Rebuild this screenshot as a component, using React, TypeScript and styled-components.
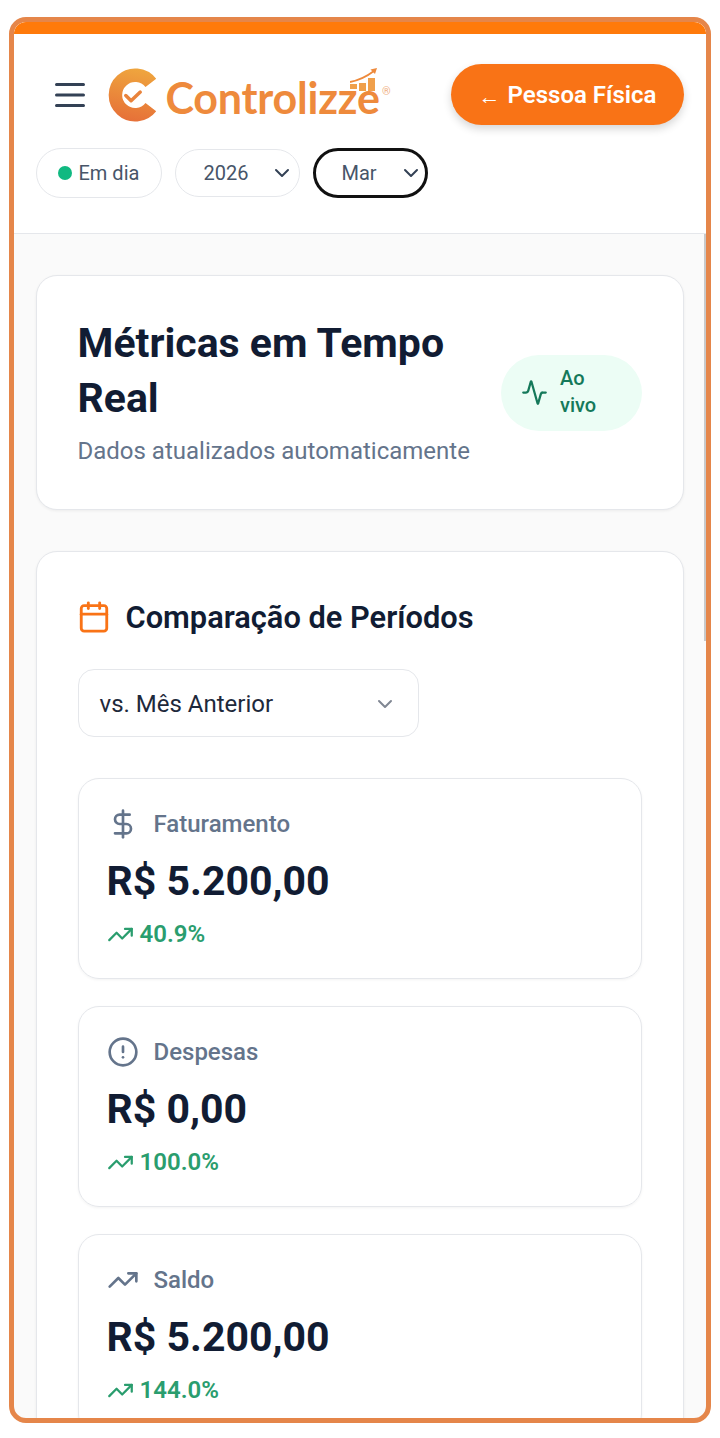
import React from 'react';
import styled, { createGlobalStyle } from 'styled-components';
import { Activity, AlertCircle, Calendar, ChevronDown, DollarSign, TrendingUp } from 'lucide-react';

const GlobalStyle = createGlobalStyle`
  * {
    box-sizing: border-box;
  }
  html,
  body {
    margin: 0;
    background: #fff;
    font-family: Roboto, 'Liberation Sans', sans-serif;
  }
`;

const Frame = styled.div`
  margin: 17px 9px 15px;
  height: 1406px;
  border: 5px solid #e5864a;
  border-radius: 17px;
  overflow: hidden;
  background: #fafafa;
`;

const Header = styled.header`
  background: #fff;
  border-top: 12px solid #ff7a0a;
  border-bottom: 1px solid #e5e7eb;
  height: 212px;
  padding: 30px 22px 0 21.5px;
`;

const TopRow = styled.div`
  display: flex;
  align-items: center;
  justify-content: space-between;
`;

const Brand = styled.div`
  display: flex;
  align-items: center;
  padding-left: 16px;
`;

const MenuIcon = styled.svg`
  color: #334155;
  margin-right: 20px;
`;

const LogoWord = styled.span`
  position: relative;
  margin-left: 7px;
  padding-top: 7px;
  font-family: Lato, sans-serif;
  font-size: 43px;
  font-weight: 700;
  letter-spacing: -0.2px;
  line-height: 50px;
  color: #ee8a3c;

  svg {
    position: absolute;
    top: 2px;
    right: 2px;
  }

  sup {
    position: absolute;
    top: 20px;
    right: -11px;
    font-family: Roboto, sans-serif;
    font-size: 11px;
    font-weight: 400;
    line-height: 12px;
    letter-spacing: 0;
    color: #f0b184;
  }
`;

const BackButton = styled.div`
  width: 233px;
  height: 61px;
  border-radius: 31px;
  background: #f97316;
  box-shadow: 0 4px 8px rgba(0, 0, 0, 0.16);
  display: flex;
  align-items: center;
  justify-content: center;
  color: #fff;
  font-size: 24px;
  font-weight: 600;
  white-space: nowrap;

  small {
    font-size: 22px;
    font-weight: 700;
    margin: 4px 7px 0 0;
  }
`;

const Filters = styled.div`
  display: flex;
  align-items: center;
  gap: 13px;
  margin-top: 23px;
`;

const Pill = styled.div<{ $width: number; $focused?: boolean }>`
  width: ${(p) => p.$width}px;
  height: ${(p) => (p.$focused ? 50 : 48)}px;
  border-radius: 25px;
  border: ${(p) => (p.$focused ? '3px solid #111' : '1px solid #e5e7eb')};
  display: flex;
  align-items: center;
  justify-content: space-between;
  padding: 0 ${(p) => (p.$focused ? 9 : 5)}px 0 ${(p) => (p.$focused ? 26 : 28)}px;
  font-size: 20px;
  color: #475569;

  svg {
    color: #334155;
    margin-right: ${(p) => (p.$focused ? -7 : 0)}px;
  }
`;

const StatusPill = styled(Pill)`
  height: 50px;
  justify-content: flex-start;
  gap: 7px;
  padding-left: 21px;
`;

const Dot = styled.span`
  width: 14px;
  height: 14px;
  border-radius: 50%;
  background: #10b981;
`;

const Main = styled.main`
  position: relative;
  padding: 41px 22px 0 21.5px;
  display: flex;
  flex-direction: column;
  gap: 41px;
`;

const ScrollThumb = styled.div`
  position: absolute;
  top: 0;
  right: 0;
  width: 2px;
  height: 407px;
  background: #c9c9c9;
`;

const Card = styled.section`
  background: #fff;
  border: 1px solid #e5e7eb;
  border-radius: 21px;
  box-shadow: 0 1px 3px rgba(0, 0, 0, 0.06);
  padding: 41px;
`;

const LiveCard = styled(Card)`
  height: 235px;
  display: flex;
  align-items: flex-start;
  justify-content: space-between;
  padding-top: 40px;
  padding-bottom: 40px;
`;

const Title = styled.h1`
  margin: 0;
  font-size: 41px;
  line-height: 55px;
  font-weight: 700;
  color: #111c33;
  width: 395px;
`;

const Subtitle = styled.p`
  margin: 9px 0 0;
  font-size: 24px;
  line-height: 32px;
  color: #64748b;
  white-space: nowrap;
`;

const LiveBadge = styled.div`
  align-self: center;
  flex-shrink: 0;
  width: 141px;
  height: 76px;
  border-radius: 38px;
  background: #ecfdf5;
  color: #15795a;
  display: flex;
  align-items: center;
  gap: 12px;
  padding-left: 20px;
  font-size: 20px;
  font-weight: 500;
  line-height: 27px;

  span {
    width: 50px;
    margin-top: -2px;
  }
`;

const SectionHead = styled.div`
  display: flex;
  align-items: center;
  gap: 15px;
  color: #f97316;
  margin: 8px 0 0;

  svg {
    margin: -2px 0 0 -1px;
  }
`;

const SectionTitle = styled.h2`
  margin: 0;
  font-size: 30.8px;
  line-height: 34px;
  font-weight: 600;
  color: #111c33;
`;

const PeriodSelect = styled.div`
  width: 341px;
  height: 68px;
  margin-top: 34px;
  border: 1px solid #e5e7eb;
  border-radius: 16px;
  display: flex;
  align-items: center;
  justify-content: space-between;
  padding: 1px 21px 0;
  font-size: 24px;
  color: #1e293b;

  svg {
    color: #808793;
  }
`;

const Metrics = styled.div`
  display: flex;
  flex-direction: column;
  gap: 27px;
  margin-top: 41px;
`;

const Metric = styled.article`
  height: 201px;
  border: 1px solid #e5e7eb;
  border-radius: 21px;
  box-shadow: 0 1px 3px rgba(0, 0, 0, 0.05);
  padding: 27px 28px 0;
`;

const MetricLabel = styled.div`
  display: flex;
  align-items: center;
  gap: 15px;
  height: 36px;
  font-size: 24px;
  font-weight: 500;
  color: #64748b;
`;

const MetricIcon = styled.span`
  display: flex;
  width: 32px;
  justify-content: center;
`;

const MetricValue = styled.div`
  margin-top: 13px;
  font-size: 41px;
  line-height: 52px;
  font-weight: 700;
  color: #111c33;
`;

const MetricDelta = styled.div`
  display: flex;
  align-items: center;
  gap: 6px;
  margin-top: 11px;
  font-size: 24px;
  line-height: 32px;
  font-weight: 600;
  color: #2a9d6e;
`;

function LogoMark() {
  return (
    <svg width="51" height="54" viewBox="0 0 52 56" fill="none">
      <defs>
        <linearGradient id="logo-c" x1="30" y1="0" x2="20" y2="56" gradientUnits="userSpaceOnUse">
          <stop offset="0" stopColor="#efa63e" />
          <stop offset="1" stopColor="#e66f38" />
        </linearGradient>
      </defs>
      <path d="M44 15.5A20.5 20.5 0 1 0 44 40.5" stroke="url(#logo-c)" strokeWidth="14" />
      <path d="M18 28.5l5.5 5.5L33 25" stroke="#e9833c" strokeWidth="3.6" strokeLinecap="round" strokeLinejoin="round" />
    </svg>
  );
}

function LogoChart() {
  return (
    <svg width="28" height="24" viewBox="0 0 28 24" fill="none">
      <path d="M0 14C8 12.5 16 9 24 3" stroke="#ee8a3c" strokeWidth="1.8" />
      <path d="M20.5 1.5L27 0l-2 6z" fill="#ee8a3c" />
      <path d="M0 16h7v5H0zM9 15h7v8H9zM18 10h7v13h-7z" fill="#f0a04b" />
    </svg>
  );
}

const metrics = [
  { label: 'Faturamento', value: 'R$ 5.200,00', delta: '40.9%', icon: <DollarSign size={32} /> },
  { label: 'Despesas', value: 'R$ 0,00', delta: '100.0%', icon: <AlertCircle size={32} /> },
  { label: 'Saldo', value: 'R$ 5.200,00', delta: '144.0%', icon: <TrendingUp size={32} /> },
];

export default function App(): JSX.Element {
  return (
    <>
      <GlobalStyle />
      <Frame>
        <Header>
          <TopRow>
            <Brand>
              <MenuIcon width="36" height="36" viewBox="0 0 24 24" fill="none" stroke="currentColor" strokeWidth="2" strokeLinecap="round">
                <path d="M3 5h18M3 12h18M3 19h18" />
              </MenuIcon>
              <LogoMark />
              <LogoWord>
                Controlizze
                <LogoChart />
                <sup>®</sup>
              </LogoWord>
            </Brand>
            <BackButton>
              <small>←</small> Pessoa Física
            </BackButton>
          </TopRow>
          <Filters>
            <StatusPill $width={126}>
              <Dot />
              Em dia
            </StatusPill>
            <Pill $width={125}>
              2026
              <ChevronDown size={24} />
            </Pill>
            <Pill $width={115} $focused>
              Mar
              <ChevronDown size={24} />
            </Pill>
          </Filters>
        </Header>
        <Main>
          <ScrollThumb />
          <LiveCard>
            <div>
              <Title>Métricas em Tempo Real</Title>
              <Subtitle>Dados atualizados automaticamente</Subtitle>
            </div>
            <LiveBadge>
              <Activity size={27} />
              <span>Ao vivo</span>
            </LiveBadge>
          </LiveCard>
          <Card>
            <SectionHead>
              <Calendar size={34} />
              <SectionTitle>Comparação de Períodos</SectionTitle>
            </SectionHead>
            <PeriodSelect>
              vs. Mês Anterior
              <ChevronDown size={24} />
            </PeriodSelect>
            <Metrics>
              {metrics.map((m) => (
                <Metric key={m.label}>
                  <MetricLabel>
                    <MetricIcon>{m.icon}</MetricIcon>
                    {m.label}
                  </MetricLabel>
                  <MetricValue>{m.value}</MetricValue>
                  <MetricDelta>
                    <TrendingUp size={27} />
                    {m.delta}
                  </MetricDelta>
                </Metric>
              ))}
            </Metrics>
          </Card>
        </Main>
      </Frame>
    </>
  );
}
